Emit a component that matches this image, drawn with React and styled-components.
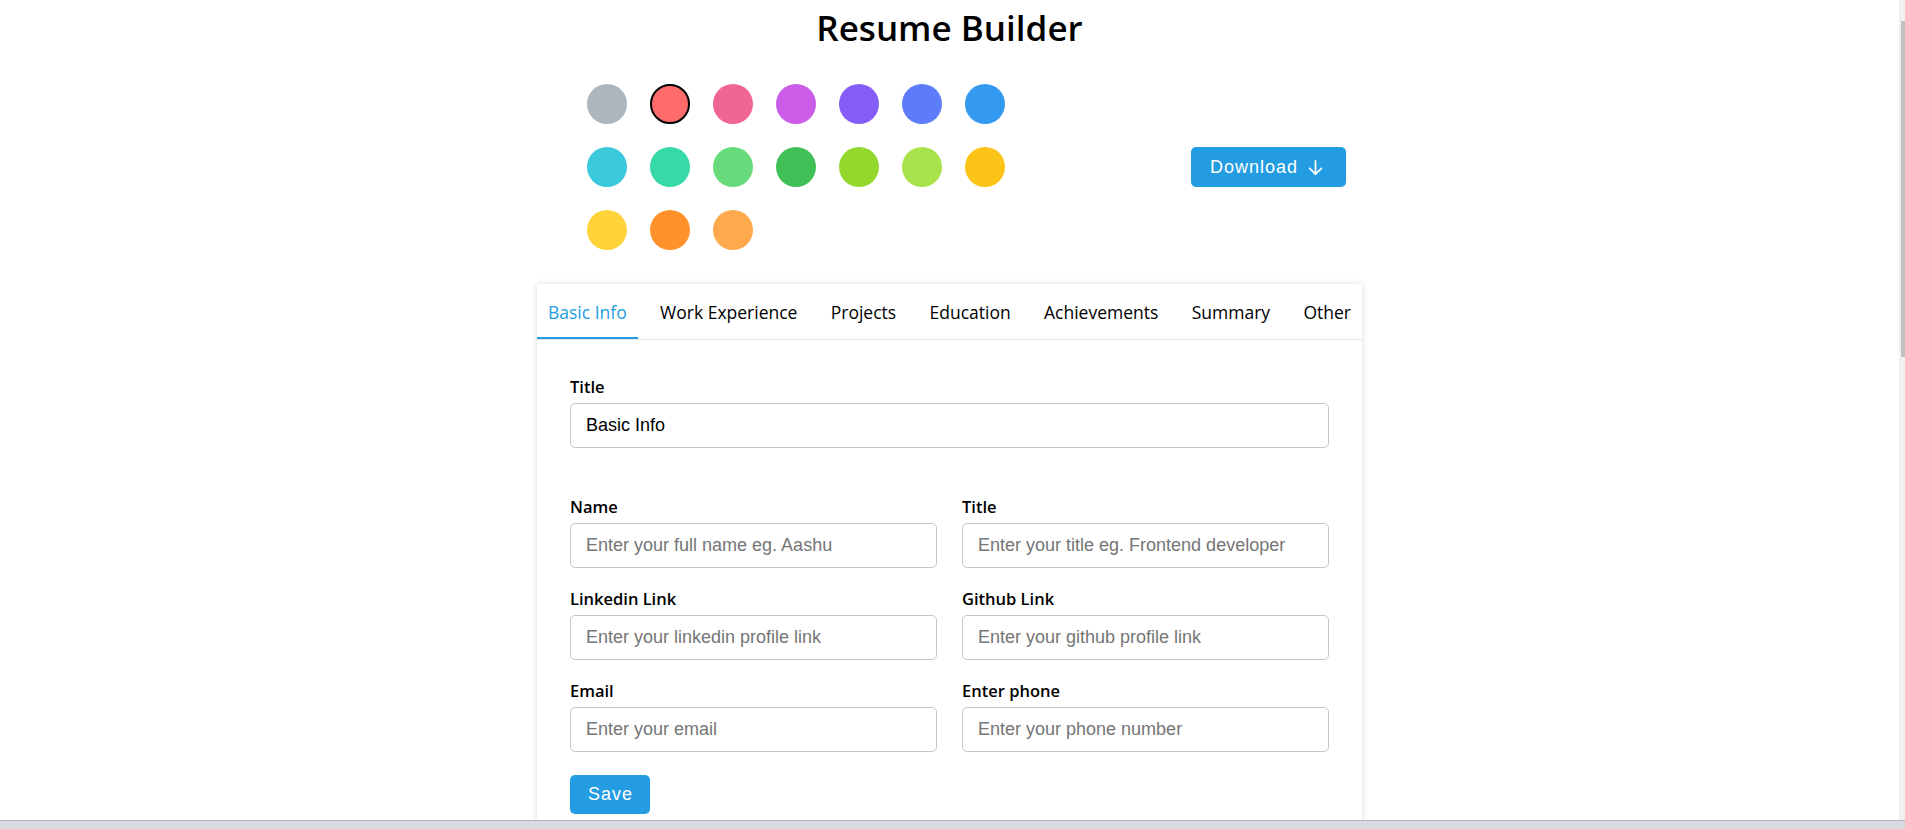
import React, { useState } from "react";
import styled, { createGlobalStyle } from "styled-components";

const GlobalStyle = createGlobalStyle`
  html, body { margin: 0; padding: 0; height: 100%; overflow: hidden; background: #fff; }
  * { box-sizing: border-box; }
  #root { height: 100%; }
`;

const BLUE = "#239ce2";
const UI_FONT = `"Open Sans", "Noto Sans", sans-serif`;
const FIELD_FONT = `"Liberation Sans", Arial, sans-serif`;

const Shell = styled.div`
  display: flex;
  flex-direction: column;
  height: 100vh;
`;

const Viewport = styled.div`
  flex: 1;
  display: flex;
  min-height: 0;
`;

const Page = styled.main`
  flex: 1;
  overflow: hidden;
  font-family: ${UI_FONT};
  color: #000;
`;

const ScrollRail = styled.div`
  width: 6px;
  background: #f0f0f0;
  padding: 21px 0 0 2px;
`;

const ScrollThumb = styled.div`
  height: 336px;
  background: #c1c1c1;
`;

const BottomBar = styled.div`
  height: 9px;
  background: #dadbe0;
  border-top: 1px solid #b4b4b8;
`;

const Heading = styled.h1`
  margin: 8px 0 0;
  text-align: center;
  font-size: 35px;
  line-height: 40px;
  font-weight: 600;
`;

const Toolbar = styled.section`
  width: 825px;
  margin: 36px auto 0;
  padding: 0 16px 0 50px;
  display: flex;
  align-items: center;
  justify-content: space-between;
`;

const Swatches = styled.div`
  display: grid;
  grid-template-columns: repeat(7, 40px);
  gap: 23px;
`;

const Swatch = styled.button`
  width: 40px;
  height: 40px;
  padding: 0;
  border-radius: 50%;
  background: ${(p) => p.$color};
  border: ${(p) => (p.$active ? "2px solid #000" : "none")};
  cursor: pointer;
`;

const PrimaryButton = styled.button`
  display: inline-flex;
  align-items: center;
  gap: ${(p) => (p.$icon ? "8px" : "0")};
  height: ${(p) => p.$h}px;
  padding: 0 ${(p) => p.$pr}px 0 ${(p) => p.$pl}px;
  background: ${BLUE};
  color: #fff;
  border: none;
  border-radius: 5px;
  font-family: ${FIELD_FONT};
  font-size: 18px;
  letter-spacing: 1px;
  cursor: pointer;
`;

const Card = styled.section`
  width: 825px;
  margin: 34px auto 0;
  background: #fff;
  box-shadow: 0 0 6px rgba(0, 0, 0, 0.14);
`;

const TabBar = styled.nav`
  display: flex;
  justify-content: space-between;
  border-bottom: 1px solid #e4e4e4;
`;

const Tab = styled.div`
  height: 55px;
  padding: 3px 11px 0;
  display: flex;
  align-items: center;
  font-size: 17.5px;
  font-weight: 500;
  color: ${(p) => (p.$active ? BLUE : "#000")};
  border-bottom: 2px solid ${(p) => (p.$active ? BLUE : "transparent")};
  cursor: pointer;
  white-space: nowrap;
`;

const Body = styled.div`
  padding: 36px 33px 34px;
`;

const Field = styled.div`
  display: flex;
  flex-direction: column;
  margin-bottom: ${(p) => p.$mb || 0}px;
`;

const Label = styled.label`
  font-size: 16.5px;
  line-height: 22px;
  font-weight: 600;
  margin-bottom: 5px;
`;

const Input = styled.input`
  height: 45px;
  padding: 0 15px;
  border: 1px solid #c6c6c6;
  border-radius: 5px;
  font-family: ${FIELD_FONT};
  font-size: 18px;
  color: #000;
  outline: none;
  &::placeholder { color: #757575; }
`;

const Grid = styled.div`
  display: grid;
  grid-template-columns: 1fr 1fr;
  column-gap: 25px;
  row-gap: 20px;
`;

const Actions = styled.div`
  margin-top: 23px;
`;

const colors = [
  "#adb5bd", "#ff6b6b", "#f06595", "#cc5de8", "#845ef7", "#5c7cfa", "#339af0",
  "#3bc9db", "#38d9a9", "#69db7c", "#40c057", "#94d82d", "#a9e34b", "#fcc419",
  "#ffd43b", "#ff922b", "#ffa94d",
];

const tabs = ["Basic Info", "Work Experience", "Projects", "Education", "Achievements", "Summary", "Other"];

const fields = [
  ["Name", "Enter your full name eg. Aashu"],
  ["Title", "Enter your title eg. Frontend developer"],
  ["Linkedin Link", "Enter your linkedin profile link"],
  ["Github Link", "Enter your github profile link"],
  ["Email", "Enter your email"],
  ["Enter phone", "Enter your phone number"],
];

const ArrowDown = () => (
  <svg width="19" height="19" viewBox="0 0 24 24" fill="none" stroke="currentColor" strokeWidth="2.2" strokeLinecap="round" strokeLinejoin="round">
    <path d="M12 3.5v17" />
    <path d="m19.5 13-7.5 7.5L4.5 13" />
  </svg>
);

export default function App() {
  const [active, setActive] = useState(1);
  const [tab, setTab] = useState(0);
  return (
    <Shell>
      <GlobalStyle />
      <Viewport>
        <Page>
          <Heading>Resume Builder</Heading>
          <Toolbar>
            <Swatches>
              {colors.map((c, i) => (
                <Swatch key={c} $color={c} $active={i === active} onClick={() => setActive(i)} aria-label={c} />
              ))}
            </Swatches>
            <PrimaryButton $h={40} $pl={19} $pr={21} $icon>
              Download <ArrowDown />
            </PrimaryButton>
          </Toolbar>
          <Card>
            <TabBar>
              {tabs.map((t, i) => (
                <Tab key={t} $active={i === tab} onClick={() => setTab(i)}>{t}</Tab>
              ))}
            </TabBar>
            <Body>
              <Field $mb={48}>
                <Label>Title</Label>
                <Input defaultValue="Basic Info" />
              </Field>
              <Grid>
                {fields.map(([l, p]) => (
                  <Field key={l}>
                    <Label>{l}</Label>
                    <Input placeholder={p} />
                  </Field>
                ))}
              </Grid>
              <Actions>
                <PrimaryButton $h={39} $pl={18} $pr={17}>Save</PrimaryButton>
              </Actions>
            </Body>
          </Card>
        </Page>
        <ScrollRail>
          <ScrollThumb />
        </ScrollRail>
      </Viewport>
      <BottomBar />
    </Shell>
  );
}
